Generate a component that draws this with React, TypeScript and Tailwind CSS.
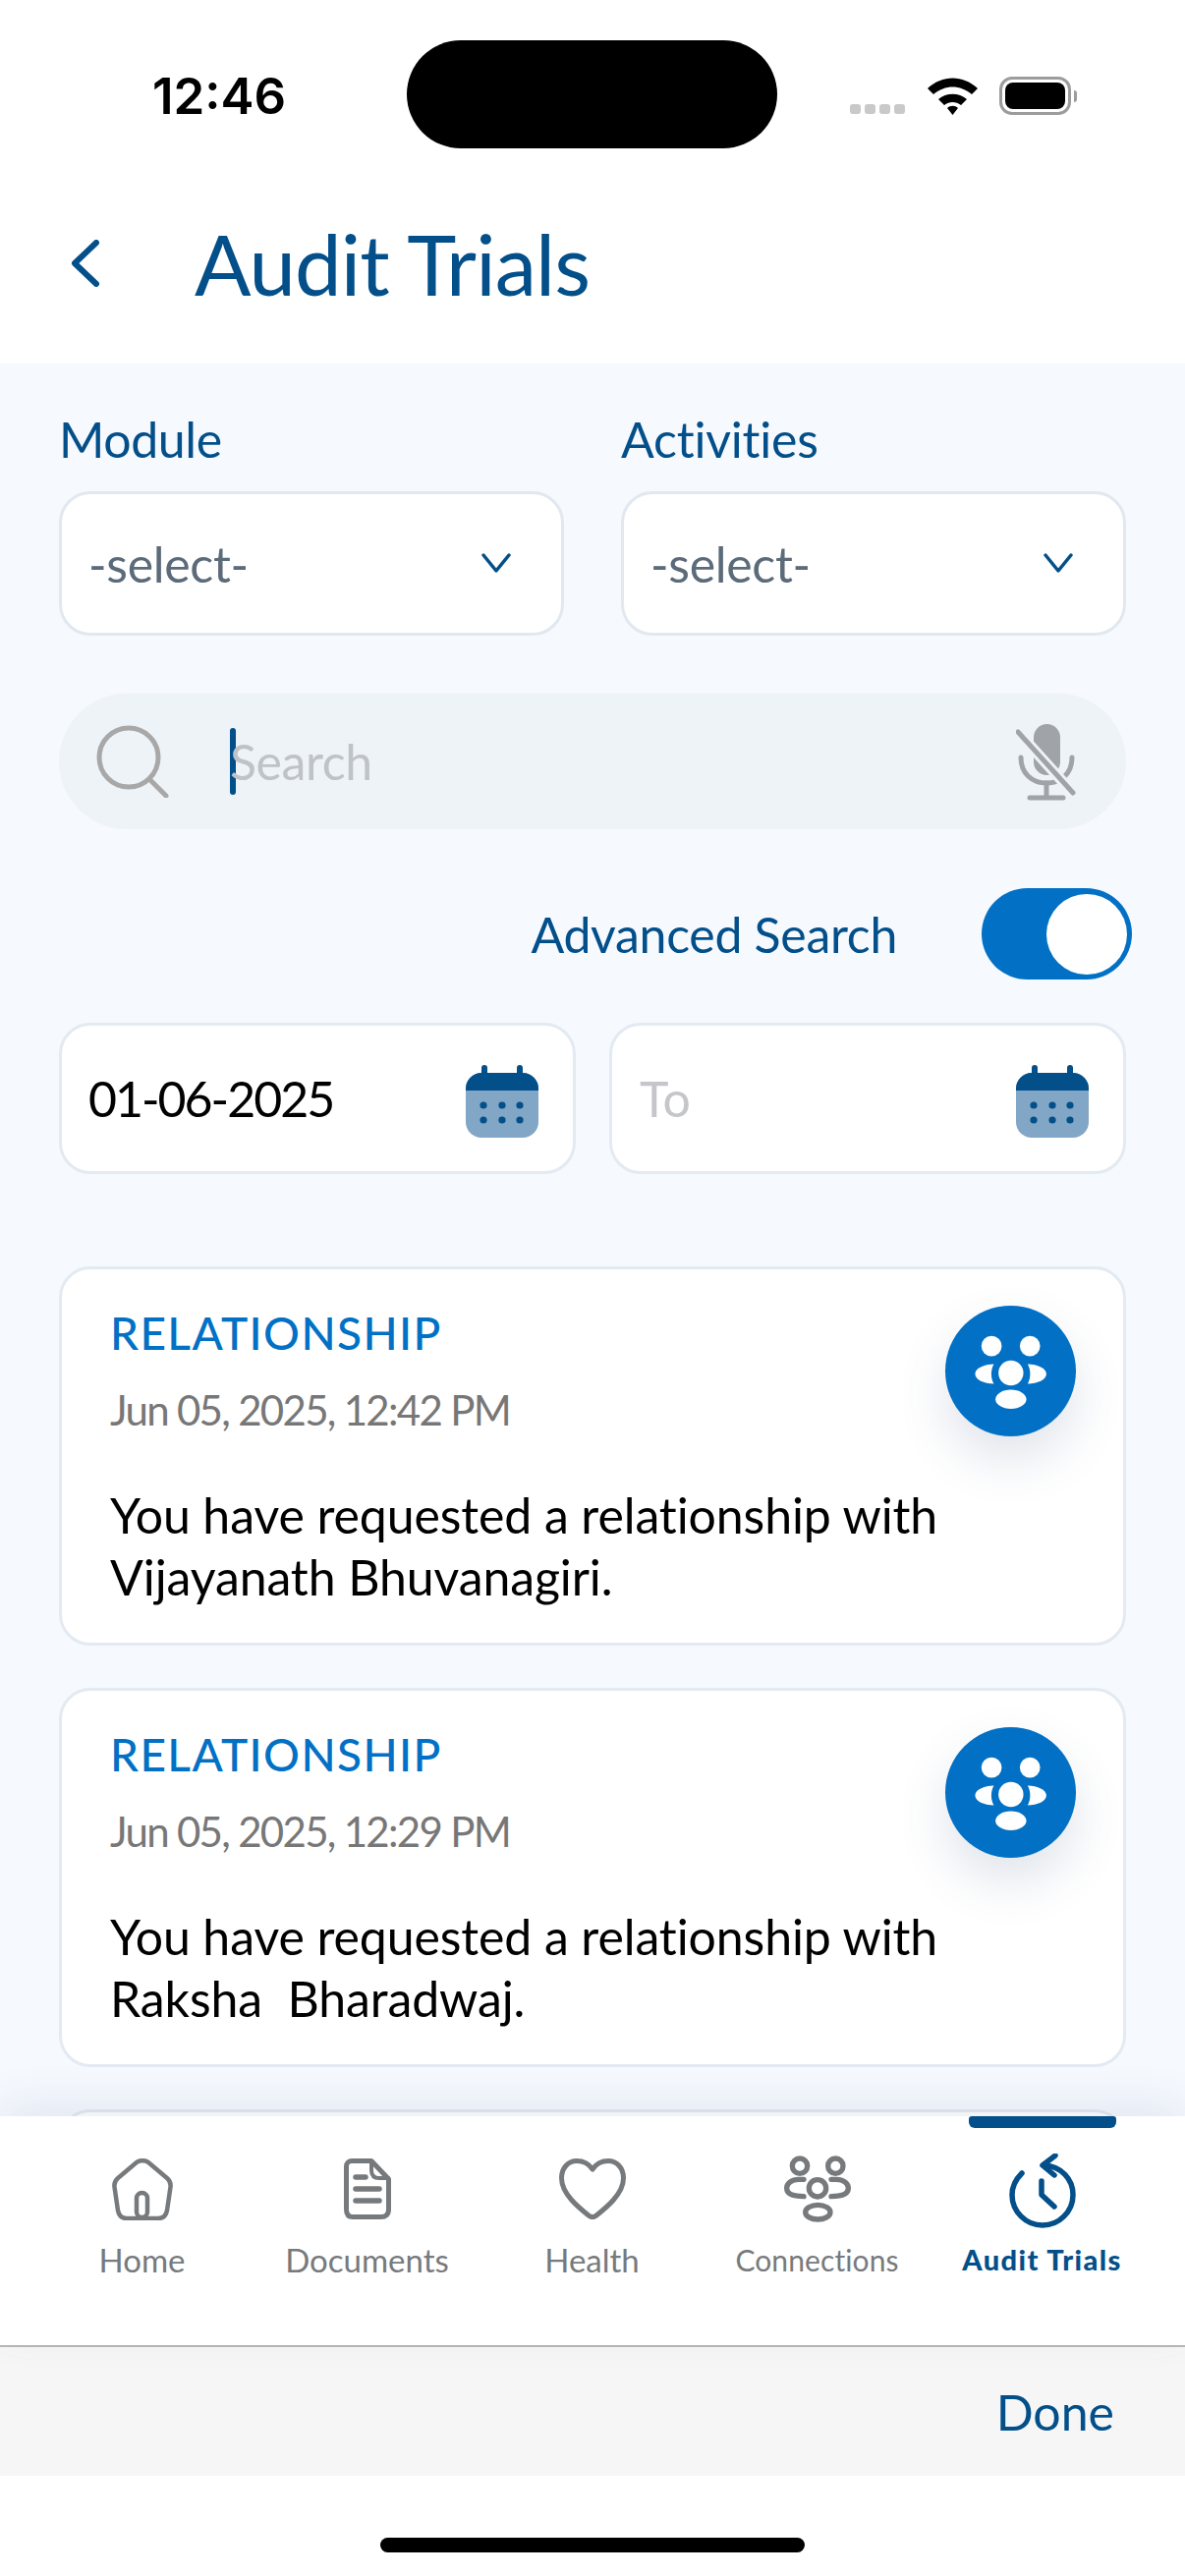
const font = { fontFamily: "Lato, 'Open Sans', sans-serif" };

function SelectBox() {
  return (
    <div className="flex h-[147px] items-center justify-between rounded-[32px] border-[3px] border-[#e1e8f0] bg-white pl-[27px] pr-[51px]">
      <span className="text-[50px] leading-[60px] tracking-[-0.3px] text-[#5b6b7a]">-select-</span>
      <svg width="30" height="20" viewBox="0 0 30 20" fill="none" stroke="#034f8a" strokeWidth="3.5" strokeLinecap="round" strokeLinejoin="round" className="mb-[2px]">
        <path d="M2 2 L15 18 L28 2" />
      </svg>
    </div>
  );
}

function CalendarIcon() {
  return (
    <svg width="74" height="74" viewBox="0 0 74 74" className="mt-[6px]">
      <rect x="0" y="8" width="74" height="66" rx="16" fill="#82a6c5" />
      <path d="M0 26 V24 A16 16 0 0 1 16 8 H58 A16 16 0 0 1 74 24 V26 Z" fill="#034f8a" />
      <rect x="16" y="0" width="6" height="14" rx="3" fill="#034f8a" />
      <rect x="52" y="0" width="6" height="14" rx="3" fill="#034f8a" />
      {[18, 37, 55].map((x) => (
        <g key={x} fill="#034f8a">
          <circle cx={x} cy="41" r="3.6" />
          <circle cx={x} cy="56" r="3.6" />
        </g>
      ))}
    </svg>
  );
}

function PeopleFilled() {
  return (
    <svg width="133" height="133" viewBox="67 57 398 398" fill="#fff">
      <circle cx="208" cy="180" r="31" />
      <circle cx="325" cy="180" r="31" />
      <circle cx="267" cy="262" r="38" />
      <path d="M215 235 C185 235 158 248 158 265 C158 282 185 295 215 295 C205 278 205 252 215 235 Z" />
      <path d="M318 235 C348 235 375 248 375 265 C375 282 348 295 318 295 C328 278 328 252 318 235 Z" />
      <ellipse cx="267" cy="342" rx="47" ry="29" />
    </svg>
  );
}

function ActivityCard({ date, children }: any) {
  return (
    <div className="relative h-[386px] shrink-0 rounded-[32px] border-[3px] border-[#e3eaf2] bg-white pl-[49px] pt-[40px]">
      <div className="text-[46px] font-medium leading-[50px] tracking-[1.4px] text-[#0271c5]">RELATIONSHIP</div>
      <div className="mt-[28px] text-[42px] leading-[50px] tracking-[-1.7px] text-[#777777]">{date}</div>
      <div className="mt-[51px] text-[50px] leading-[63px] tracking-[-0.1px] text-black">{children}</div>
      <div className="absolute right-[48px] top-[37px] h-[133px] w-[133px] rounded-full bg-[#0271c5] shadow-[0_24px_50px_rgba(60,90,130,0.16)]">
        <PeopleFilled />
      </div>
    </div>
  );
}

function Tab({ label, className, children }: any) {
  return (
    <div className="flex w-[229px] flex-col items-center">
      <div className="flex h-[78px] items-center justify-center">{children}</div>
      <div className={className}>{label}</div>
    </div>
  );
}

export default function App() {
  return (
    <div className="flex h-[2622px] w-[1206px] flex-col overflow-hidden bg-white" style={font}>
      {/* status bar */}
      <div className="flex h-[190px] shrink-0 items-start">
        <div className="ml-[155px] mt-[68px] w-[259px] text-[51px] font-semibold leading-[60px] text-black" style={{ fontFamily: "Inter, sans-serif" }}>12:46</div>
        <div className="mt-[41px] h-[110px] w-[377px] rounded-[55px] bg-black" />
        <div className="ml-[74px] mt-[78px] flex items-end gap-[23px]">
          <div className="mb-[1px] flex gap-[4px]">
            {[0, 1, 2, 3].map((i) => (
              <div key={i} className="h-[10px] w-[11px] rounded-[3px] bg-[#c9c9c9]" />
            ))}
          </div>
          <svg width="51" height="38" viewBox="0 0 51 38">
            <path d="M0 11 C15 -3 36 -3 51 11 L45 17 C33 7 18 7 6 17 Z" />
            <path d="M11 22 C19 15 32 15 40 22 L34 28 C29 24 22 24 17 28 Z" />
            <path d="M20 31 C23 28 28 28 31 31 L25.5 38 Z" />
          </svg>
          <div className="ml-[-1px] flex items-center gap-[3px]">
            <div className="h-[39px] w-[73px] rounded-[13px] border-[3px] border-[#9c9c9c] p-[3px]">
              <div className="h-full w-full rounded-[8px] bg-black" />
            </div>
            <div className="h-[12px] w-[3px] rounded-r-full bg-[#9c9c9c]" />
          </div>
        </div>
      </div>

      {/* header */}
      <div className="flex h-[180px] shrink-0 items-start">
        <svg width="30" height="48" viewBox="0 0 30 48" fill="none" stroke="#034f8a" strokeWidth="6" strokeLinecap="round" strokeLinejoin="round" className="ml-[72px] mt-[54px]">
          <path d="M26 3 L4 24 L26 45" />
        </svg>
        <div className="ml-[96px] mt-[28px] text-[85px] leading-[100px] tracking-[-0.9px] text-[#034f8a]">Audit Trials</div>
      </div>

      {/* content */}
      <div className="flex min-h-0 flex-1 flex-col overflow-hidden bg-[#f6f9fe] px-[60px] pt-[47px]">
        <div className="grid shrink-0 grid-cols-[514px_514px] gap-x-[58px]">
          <div className="text-[50px] leading-[60px] tracking-[-0.4px] text-[#034f8a]">Module</div>
          <div className="text-[50px] leading-[60px] tracking-[-0.2px] text-[#034f8a]">Activities</div>
          <div className="mt-[23px]"><SelectBox /></div>
          <div className="mt-[23px]"><SelectBox /></div>
        </div>

        <div className="mt-[59px] flex h-[138px] shrink-0 items-center rounded-[69px] bg-[#eef3f7] pl-[38px] pr-[50px]">
          <svg width="74" height="74" viewBox="0 0 74 74" fill="none" stroke="#a8a8a8" strokeWidth="5" strokeLinecap="round">
            <circle cx="33" cy="33" r="30" />
            <path d="M54 55 L71 72" />
          </svg>
          <div className="ml-[62px] h-[68px] w-[6px] rounded-full bg-[#034f8a]" />
          <div className="ml-[-6px] flex-1 text-[50px] leading-[60px] tracking-[-0.4px] text-[#bfc3c8]">Search</div>
          <svg width="62" height="78" viewBox="0 0 62 78" fill="none" className="mt-[2px]">
            <rect x="18" y="0" width="27" height="52" rx="13.5" fill="#a0a4a8" />
            <path d="M5 34 C5 50 16 60 31 60 C46 60 57 50 57 34" stroke="#a0a4a8" strokeWidth="5" strokeLinecap="round" />
            <path d="M31 60 V74 M14 75 H48" stroke="#a0a4a8" strokeWidth="5" strokeLinecap="round" />
            <path d="M2 8 L56 68" stroke="#eef3f7" strokeWidth="11" />
            <path d="M2 8 L58 70" stroke="#a0a4a8" strokeWidth="5" strokeLinecap="round" />
          </svg>
        </div>

        <div className="mr-[-6px] mt-[60px] flex shrink-0 items-center justify-end">
          <div className="mr-[86px] text-[50px] leading-[60px] tracking-[-0.3px] text-[#034f8a]">Advanced Search</div>
          <div className="flex h-[93px] w-[153px] items-center justify-end rounded-full bg-[#0271c5] pr-[5px]">
            <div className="h-[82px] w-[82px] rounded-full bg-white" />
          </div>
        </div>

        <div className="mt-[44px] grid shrink-0 grid-cols-[526px_526px] gap-x-[34px]">
          <div className="flex h-[154px] items-center justify-between rounded-[32px] border-[3px] border-[#e3eaf2] bg-white pl-[27px] pr-[35px]">
            <span className="text-[50px] leading-[60px] tracking-[-2px] text-black">01-06-2025</span>
            <CalendarIcon />
          </div>
          <div className="flex h-[154px] items-center justify-between rounded-[32px] border-[3px] border-[#e3eaf2] bg-white pl-[28px] pr-[35px]">
            <span className="text-[50px] leading-[60px] text-[#c4c6c9]">To</span>
            <CalendarIcon />
          </div>
        </div>

        <div className="mt-[94px] flex shrink-0 flex-col gap-[43px]">
          <ActivityCard date="Jun 05, 2025, 12:42 PM">
            You have requested a relationship with
            <br />
            Vijayanath Bhuvanagiri.
          </ActivityCard>
          <ActivityCard date="Jun 05, 2025, 12:29 PM">
            You have requested a relationship with
            <br />
            Raksha&nbsp; Bharadwaj.
          </ActivityCard>
          {/* next card, only its top edge shows above the tab bar */}
          <div className="h-[386px] shrink-0 rounded-[32px] border-[3px] border-[#e3eaf2] bg-white" />
        </div>
      </div>

      {/* tab bar */}
      <div className="relative z-10 h-[233px] shrink-0 bg-white shadow-[0_-14px_40px_rgba(70,100,140,0.10)]">
        <div className="absolute left-[986px] top-0 h-[12px] w-[150px] rounded-b-[6px] rounded-t-[3px] bg-[#034f8a]" />
        <div className="flex pl-[30px] pt-[35px]">
          <Tab label="Home" className="mt-[11px] text-[33px] leading-[44px] text-[#777a7c]">
            <svg width="62" height="63" viewBox="0 0 62 63" fill="none" stroke="#777a7c" strokeWidth="4.5" strokeLinejoin="round">
              <path d="M25 4 C28 1.500 34 1.500 37 4 L56 20 C59 22.500 60 25 59.500 29 L56 53 C55 58 52 61 47 61 H15 C10 61 7 58 6 53 L2.500 29 C2 25 3 22.500 6 20 Z" />
              <rect x="25" y="35" width="11" height="25" rx="5.500" />
            </svg>
          </Tab>
          <Tab label="Documents" className="mt-[11px] text-[33px] leading-[44px] text-[#777a7c]">
            <svg width="48" height="62" viewBox="0 0 48 62" fill="none" stroke="#777a7c" strokeLinecap="round" strokeLinejoin="round">
              <path d="M8 2.500 H28 L45.500 21 V52 C45.500 57 42.500 59.500 38 59.500 H9 C5 59.500 2.500 57 2.500 52 V8 C2.500 5 5 2.500 8 2.500 Z" strokeWidth="5" />
              <path d="M28 3 V12 C28 17 30 20 36 20 H45" strokeWidth="4" />
              <path d="M12 19 H22" strokeWidth="5.500" />
              <path d="M12 31 H36 M12 43 H36" strokeWidth="5.500" />
            </svg>
          </Tab>
          <Tab label="Health" className="mt-[11px] text-[33px] leading-[44px] text-[#777a7c]">
            <svg width="68" height="62" viewBox="0 0 68 62" fill="none" stroke="#777a7c" strokeWidth="5" strokeLinejoin="round">
              <path d="M34 11 C30 5 24 2.500 18 2.500 C9 2.500 2.500 10 2.500 20 C2.500 36 20 50 30 58 C32.500 60 35.500 60 38 58 C48 50 65.500 36 65.500 20 C65.500 10 59 2.500 50 2.500 C44 2.500 38 5 34 11 Z" />
            </svg>
          </Tab>
          <Tab label="Connections" className="mt-[11px] text-[30px] leading-[44px] tracking-[0.1px] text-[#777a7c]">
            <svg width="68" height="68" viewBox="178 165 204 204" fill="none" stroke="#777a7c" strokeWidth="16" strokeLinecap="round">
              <circle cx="226" cy="197" r="23" />
              <circle cx="335" cy="197" r="23" />
              <circle cx="280" cy="265" r="26" />
              <path d="M238 238 H222 C202 238 186 250 186 265 C186 280 202 290 238 290" />
              <path d="M322 238 H338 C358 238 374 250 374 265 C374 280 358 290 322 290" />
              <ellipse cx="281" cy="338" rx="38" ry="22" />
            </svg>
          </Tab>
          <Tab label="Audit Trials" className="mt-[11px] text-[29px] font-black leading-[44px] tracking-[1.4px] text-[#034f8a]">
            <svg width="68" height="76" viewBox="0 0 68 76" fill="none" stroke="#034f8a" strokeLinecap="round" strokeLinejoin="round" className="mt-[4px]">
              <path d="M13 20 C7 26 3 33 3 42 C3 59 17 73 34 73 C51 73 65 59 65 42 C65 26 53 13 36 12" strokeWidth="5.500" />
              <path d="M47 2 L34 12 L46 22" strokeWidth="5.500" />
              <path d="M33 28 V42 L46 54" strokeWidth="5.500" />
            </svg>
          </Tab>
        </div>
      </div>

      {/* keyboard accessory */}
      <div className="flex h-[133px] shrink-0 items-center justify-end border-t-[2px] border-[#b7b7b7] bg-[#f6f6f6] pr-[72px]">
        <span className="text-[50px] leading-[60px] text-[#034f8a]">Done</span>
      </div>

      {/* home indicator */}
      <div className="flex h-[102px] shrink-0 justify-center pt-[63px]">
        <div className="h-[15px] w-[432px] rounded-full bg-black" />
      </div>
    </div>
  );
}
